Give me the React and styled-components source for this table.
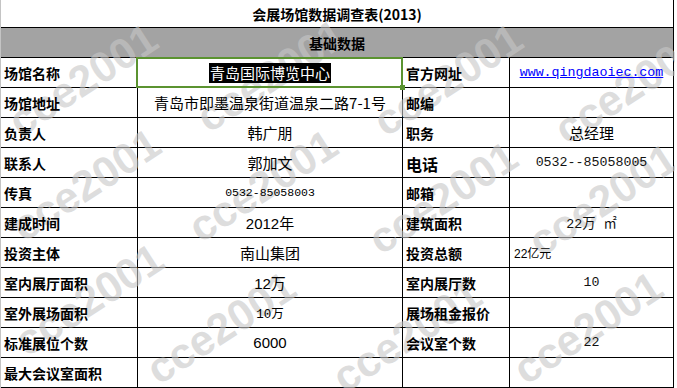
import React from "react";
import styled, { createGlobalStyle, css } from "styled-components";

const rows = [
  ["场馆名称", { text: "青岛国际博览中心", kind: "selected" }, "官方网址", { text: "www.qingdaoiec.com", kind: "link" }],
  ["场馆地址", { text: "青岛市即墨温泉街道温泉二路7-1号" }, "邮编", null],
  ["负责人", { text: "韩广朋" }, "职务", { text: "总经理" }],
  ["联系人", { text: "郭加文" }, "电话", { text: "0532--85058005", kind: "mono" }],
  ["传真", { text: "0532-85058003", kind: "monoSmall" }, "邮箱", null],
  ["建成时间", { text: "2012年", kind: "arial" }, "建筑面积", { text: "22万 ㎡", kind: "mono" }],
  ["投资主体", { text: "南山集团" }, "投资总额", { text: "22亿元", kind: "left" }],
  ["室内展厅面积", { text: "12万", kind: "arial" }, "室内展厅数", { text: "10", kind: "mono" }],
  ["室外展场面积", { text: "10万", kind: "small" }, "展场租金报价", null],
  ["标准展位个数", { text: "6000", kind: "arial" }, "会议室个数", { text: "22", kind: "mono" }],
  ["最大会议室面积", null, "", null],
];

// watermark centres
const marks = [
  [82, 80], [270, 76], [447, 80], [628, 88],
  [85, 185], [262, 186], [442, 198], [602, 200],
  [88, 300], [220, 328], [406, 336], [587, 328],
];

const Global = createGlobalStyle`
  html, body {
    margin: 0;
    background: #fff;
  }
  body {
    font-family: "Noto Sans CJK SC", "Liberation Sans", sans-serif;
    color: #000;
  }
`;

const Sheet = styled.div`
  position: relative;
  z-index: 0;
  width: 674px;
  display: grid;
  grid-template-columns: 137px 265px 107px 164px;
  grid-template-rows: 28px repeat(12, 30px);
  border-left: 1px solid #c4c4c4;
  overflow: hidden;
`;

const Cell = styled.div`
  position: relative;
  box-sizing: border-box;
  display: flex;
  align-items: center;
  border-bottom: 1px solid #000;
  border-right: 1px solid #000;
  white-space: nowrap;
`;

const Txt = styled.span`
  position: relative;
  z-index: 2;
`;

const Title = styled(Cell)`
  grid-column: 1 / -1;
  justify-content: center;
  font-size: 14px;
  font-weight: 700;
  padding-top: 1px;
`;

const Section = styled(Title)`
  background: #a3a3a3;
`;

const Label = styled(Cell)`
  padding-left: 3px;
  font-size: 14px;
  font-weight: 700;
  ${(p) =>
    p.$big &&
    css`
      align-items: flex-end;
      padding-bottom: 1px;
      font-size: 16px;
    `}
`;

const valueKinds = {
  plain: css`
    font-size: 15px;
  `,
  selected: css`
    font-size: 15px;
    &::after {
      content: "";
      position: absolute;
      left: -2px;
      top: -1px;
      right: -1px;
      bottom: -1px;
      border: 2px solid #5b9330;
      z-index: 3;
    }
    &::before {
      content: "";
      position: absolute;
      right: -3px;
      bottom: -3px;
      width: 5px;
      height: 5px;
      background: #5b9330;
      z-index: 3;
    }
  `,
  link: css`
    font-family: "Liberation Mono", monospace;
    font-size: 13.3px;
    color: #0000ff;
    text-decoration: underline;
  `,
  mono: css`
    font-family: "Liberation Mono", "Noto Sans CJK SC", monospace;
    font-size: 13.3px;
    color: #111;
  `,
  monoSmall: css`
    font-family: "Liberation Mono", monospace;
    font-size: 11.5px;
  `,
  arial: css`
    font-family: "Liberation Sans", "Noto Sans CJK SC", sans-serif;
    font-size: 15px;
  `,
  small: css`
    font-family: "Liberation Mono", "Noto Sans CJK SC", monospace;
    font-size: 12.5px;
  `,
  left: css`
    justify-content: flex-start;
    padding-left: 4px;
    font-family: "Liberation Sans", "Noto Sans CJK SC", sans-serif;
    font-size: 12px;
  `,
};

const Value = styled(Cell)`
  justify-content: center;
  ${(p) => valueKinds[p.$kind || "plain"]}
`;

const Highlight = styled(Txt)`
  background: #000;
  color: #fff;
  padding: 0 1px;
  line-height: 20px;
`;

const Marks = styled.div`
  position: absolute;
  inset: 0;
  pointer-events: none;
  z-index: 1;
  overflow: hidden;
`;

const Mark = styled.span`
  position: absolute;
  left: ${(p) => p.$x}px;
  top: ${(p) => p.$y}px;
  transform: translate(-50%, -50%) rotate(-33deg);
  font-family: "Liberation Sans", Arial, sans-serif;
  font-weight: 700;
  font-size: 43px;
  line-height: 1;
  color: rgba(199, 199, 199, 0.6);
  white-space: nowrap;
`;

function renderValue(v, i) {
  if (!v) return <Value key={i} />;
  return (
    <Value key={i} $kind={v.kind}>
      {v.kind === "selected" ? <Highlight>{v.text}</Highlight> : <Txt>{v.text}</Txt>}
    </Value>
  );
}

export default function App() {
  return (
    <>
      <Global />
      <Sheet>
        <Title>
          <Txt>会展场馆数据调查表(2013)</Txt>
        </Title>
        <Section>
          <Txt>基础数据</Txt>
        </Section>
        {rows.map(([l1, v1, l2, v2], r) => (
          <React.Fragment key={r}>
            <Label>
              <Txt>{l1}</Txt>
            </Label>
            {renderValue(v1, "a")}
            <Label $big={l2 === "电话"}>
              <Txt>{l2}</Txt>
            </Label>
            {renderValue(v2, "b")}
          </React.Fragment>
        ))}
        <Marks>
          {marks.map(([x, y], i) => (
            <Mark key={i} $x={x} $y={y}>
              cce2001
            </Mark>
          ))}
        </Marks>
      </Sheet>
    </>
  );
}
